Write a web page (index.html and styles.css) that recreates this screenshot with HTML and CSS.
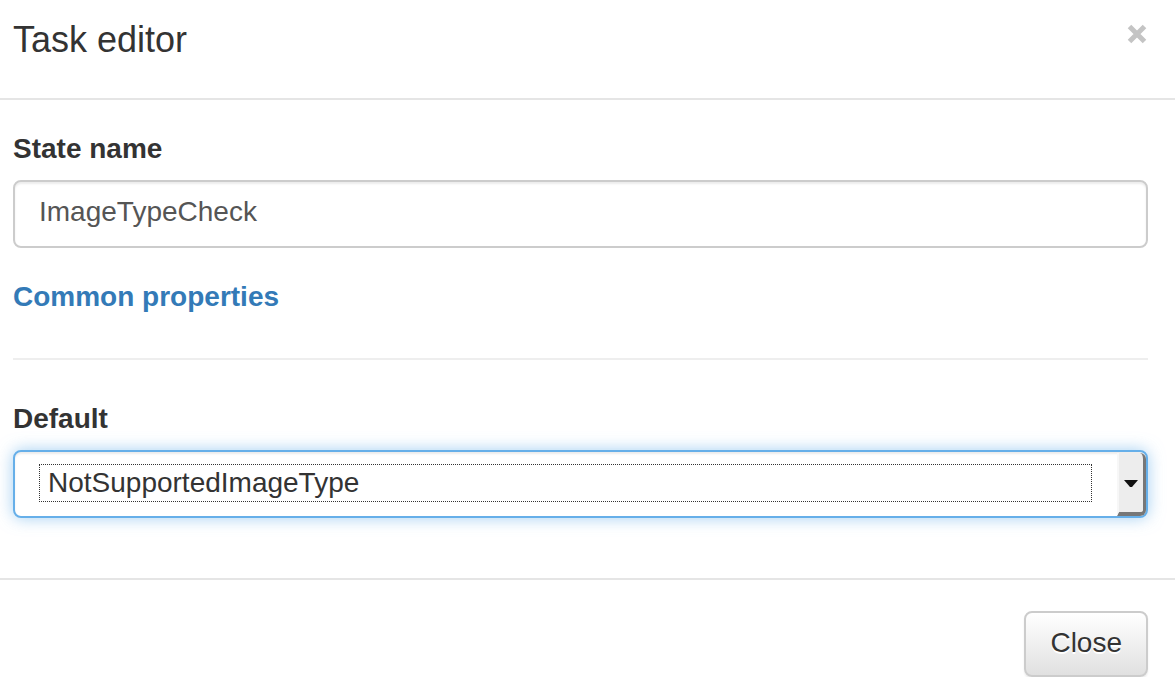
FILE: index.html
```html
<!DOCTYPE html>
<html lang="en">
<head>
<meta charset="utf-8">
<title>Task editor</title>
<link rel="stylesheet" href="styles.css">
</head>
<body>
<div class="modal">
  <div class="modal-header">
    <h4 class="modal-title">Task editor</h4>
    <button class="close" type="button" aria-label="Close">
      <svg width="20" height="20" viewBox="0 0 20 20"><path d="M2.5 2.5 L17.5 17.5 M17.5 2.5 L2.5 17.5" stroke="#c4c4c4" stroke-width="5" stroke-linecap="butt"/></svg>
    </button>
  </div>
  <div class="modal-body">
    <div class="form-group">
      <label class="label">State name</label>
      <div class="input">ImageTypeCheck</div>
    </div>
    <a class="link" href="#">Common properties</a>
    <hr class="divider">
    <div class="form-group">
      <label class="label">Default</label>
      <div class="select">
        <span class="select-value">NotSupportedImageType</span>
        <span class="select-btn">
          <svg width="14" height="8" viewBox="0 0 14 8"><path d="M0 0 H14 L8 7 H6 Z" fill="#111"/></svg>
        </span>
      </div>
    </div>
  </div>
  <div class="modal-footer">
    <button class="btn" type="button">Close</button>
  </div>
</div>
</body>
</html>
```

FILE: styles.css
```css
html, body {
  margin: 0;
  padding: 0;
  background: #fff;
  overflow: hidden;
}

body {
  font-family: "Liberation Sans", Arial, sans-serif;
  font-size: 28px;
  color: #333;
}

.modal {
  width: 1175px;
}

.modal-header {
  display: flex;
  justify-content: space-between;
  align-items: flex-start;
  padding: 20px 28px 38px 13px;
  border-bottom: 2px solid #e5e5e5;
}

.modal-title {
  margin: 0;
  font-size: 36px;
  font-weight: normal;
  line-height: 40px;
  color: #333;
}

.close {
  margin: 4px 0 0 0;
  padding: 0;
  border: 0;
  background: transparent;
  width: 20px;
  height: 20px;
  display: block;
}

.close svg {
  display: block;
}

.modal-body {
  padding: 30px 27px 30px 13px;
}

.form-group {
  margin-bottom: 30px;
}

.label {
  display: block;
  font-weight: bold;
  line-height: 37px;
  margin-bottom: 13px;
}

.input {
  box-sizing: border-box;
  height: 68px;
  border: 2px solid #ccc;
  border-radius: 8px;
  padding: 10px 24px 14px;
  line-height: 40px;
  color: #555;
  box-shadow: inset 0 2px 2px rgba(0, 0, 0, 0.075);
}

.link {
  display: block;
  font-weight: bold;
  color: #337ab7;
  text-decoration: none;
  line-height: 34px;
  padding-top: 2px;
}

.divider {
  margin: 44px 0 40px;
  border: 0;
  border-top: 2px solid #eee;
  height: 0;
}

.select {
  box-sizing: border-box;
  height: 68px;
  display: flex;
  border: 2px solid #66afe9;
  border-radius: 8px;
  background: #fff;
  box-shadow: inset 0 2px 2px rgba(0, 0, 0, 0.075), 0 0 16px rgba(102, 175, 233, 0.6);
}

.select-value {
  flex: 1;
  margin: 12px 25px 14px 24px;
  border: 1px dotted #333;
  padding: 2px 0 3px 8px;
  line-height: 31px;
  color: #333;
}

.select-btn {
  box-sizing: border-box;
  width: 29px;
  margin: 1px 0 0 0;
  display: flex;
  align-items: center;
  justify-content: center;
  background: #ededed;
  border-left: 2px solid #f7f7f7;
  border-right: 3px solid #777;
  border-bottom: 4px solid #777;
  border-radius: 0 6px 6px 0;
  padding-top: 2px;
}

.select-btn svg {
  display: block;
}

.modal-footer {
  border-top: 2px solid #e5e5e5;
  padding: 31px 27px 0 13px;
  text-align: right;
}

.btn {
  box-sizing: border-box;
  height: 66px;
  font-family: "Liberation Sans", Arial, sans-serif;
  font-size: 28px;
  line-height: 40px;
  padding: 10px 24px 12px;
  color: #333;
  border: 2px solid #ccc;
  border-radius: 8px;
  background: linear-gradient(to bottom, #fff 0, #e0e0e0 100%);
  text-shadow: 0 2px 0 #fff;
  box-shadow: inset 0 2px 0 rgba(255, 255, 255, 0.15), 0 2px 2px rgba(0, 0, 0, 0.075);
}
```
